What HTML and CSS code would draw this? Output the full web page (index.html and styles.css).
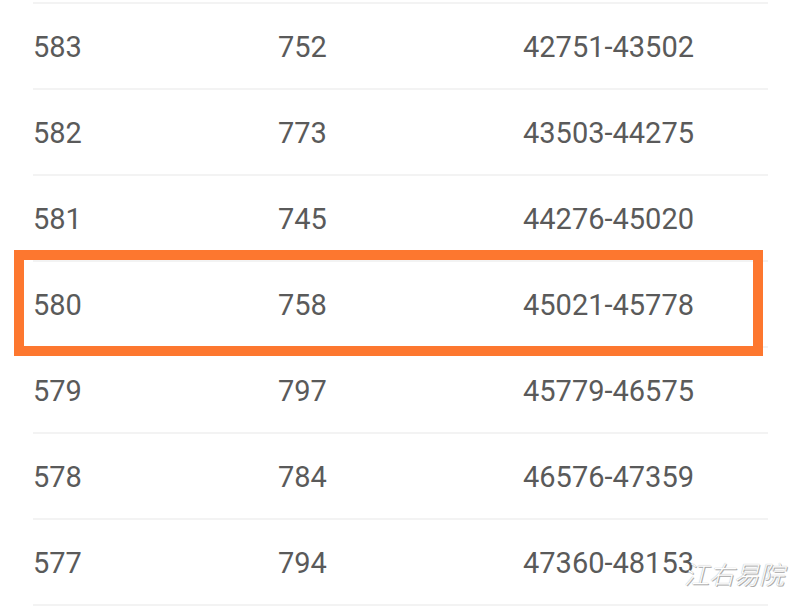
FILE: index.html
```html
<!DOCTYPE html>
<html lang="zh">
<head>
<meta charset="utf-8">
<link rel="stylesheet" href="styles.css">
</head>
<body>
<div class="page">
  <div class="table">
    <div class="row"><span class="cell">583</span><span class="cell">752</span><span class="cell">42751-43502</span></div>
    <div class="row"><span class="cell">582</span><span class="cell">773</span><span class="cell">43503-44275</span></div>
    <div class="row"><span class="cell">581</span><span class="cell">745</span><span class="cell">44276-45020</span></div>
    <div class="row"><span class="cell">580</span><span class="cell">758</span><span class="cell">45021-45778</span></div>
    <div class="row"><span class="cell">579</span><span class="cell">797</span><span class="cell">45779-46575</span></div>
    <div class="row"><span class="cell">578</span><span class="cell">784</span><span class="cell">46576-47359</span></div>
    <div class="row"><span class="cell">577</span><span class="cell">794</span><span class="cell">47360-48153</span></div>
    <div class="row last"></div>
  </div>
  <div class="highlight"></div>
  <div class="watermark">江右易院</div>
</div>
</body>
</html>
```

FILE: styles.css
```css
html, body {
  margin: 0;
  padding: 0;
  background: #ffffff;
}
.page {
  position: relative;
  width: 800px;
  height: 606px;
  overflow: hidden;
  background: #ffffff;
}
.table {
  padding-top: 2px;
  margin-left: 33px;
  width: 735px;
  display: flex;
  flex-direction: column;
}
.row {
  display: grid;
  grid-template-columns: 245px 245px 245px;
  height: 84px;
  border-top: 2px solid #f3f3f3;
  align-items: center;
}
.cell {
  font-family: Roboto, "Liberation Sans", sans-serif;
  font-size: 29px;
  color: #5a5a5a;
  line-height: 84px;
  padding-top: 1px;
}
.highlight {
  position: absolute;
  left: 14px;
  top: 250px;
  width: 729px;
  height: 86px;
  border: 10px solid #fd772f;
}
.watermark {
  position: absolute;
  left: 684px;
  top: 555px;
  font-family: "Noto Sans CJK SC", sans-serif;
  font-size: 25px;
  font-weight: 300;
  font-style: italic;
  color: #ffffff;
  text-shadow: 0 0 1px #999, 1px 1px 0 #aaa;
}
```
